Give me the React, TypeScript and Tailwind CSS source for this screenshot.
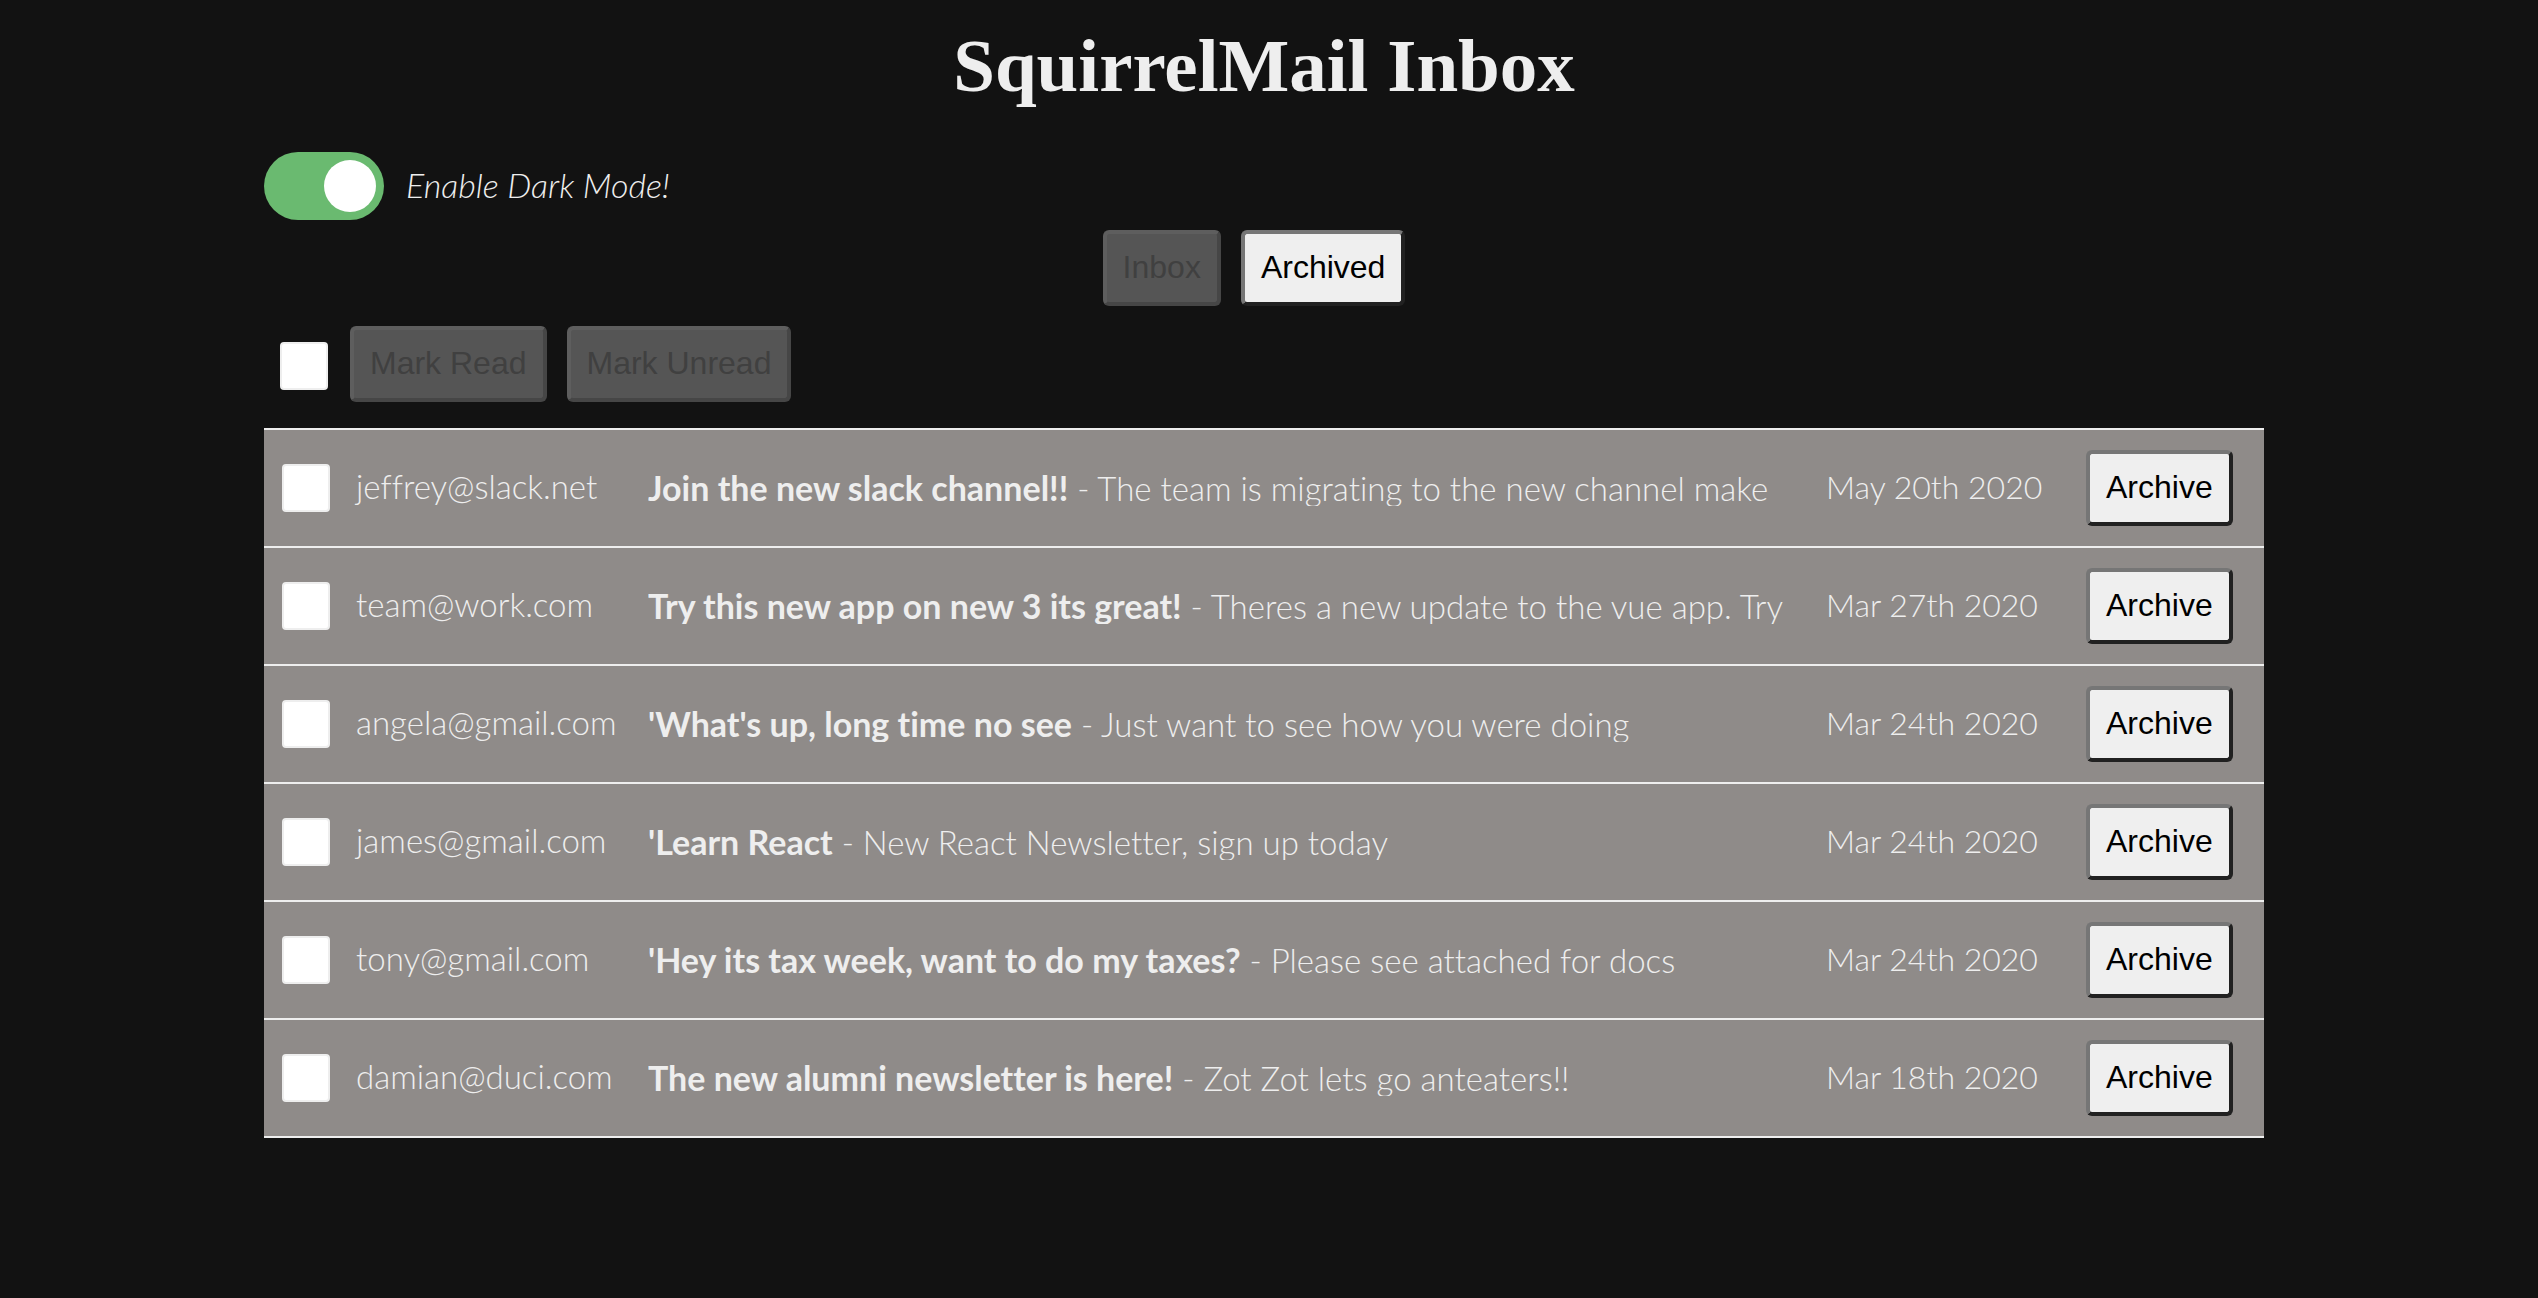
import { useState } from "react";

type Mail = { from: string; subject: string; preview: string; date: string };

const mails: Mail[] = [
  { from: "jeffrey@slack.net", subject: "Join the new slack channel!!", preview: "The team is migrating to the new channel make", date: "May 20th 2020" },
  { from: "team@work.com", subject: "Try this new app on new 3 its great!", preview: "Theres a new update to the vue app. Try", date: "Mar 27th 2020" },
  { from: "angela@gmail.com", subject: "'What's up, long time no see", preview: "Just want to see how you were doing", date: "Mar 24th 2020" },
  { from: "james@gmail.com", subject: "'Learn React", preview: "New React Newsletter, sign up today", date: "Mar 24th 2020" },
  { from: "tony@gmail.com", subject: "'Hey its tax week, want to do my taxes?", preview: "Please see attached for docs", date: "Mar 24th 2020" },
  { from: "damian@duci.com", subject: "The new alumni newsletter is here!", preview: "Zot Zot lets go anteaters!!", date: "Mar 18th 2020" },
];

const buttonBase =
  "h-[76px] rounded-md border-4 px-4 pb-0.5 font-['Liberation_Sans',Arial,sans-serif] text-[32px] leading-9 whitespace-nowrap";
const enabledButton =
  "border-t-[#767676] border-l-[#767676] border-r-[#212121] border-b-[#212121] bg-[#efefef] text-black";
const disabledButton =
  "border-t-[#5e5e5e] border-l-[#5e5e5e] border-r-[#464646] border-b-[#464646] bg-[#555555] text-[#404040]";

function Button({ label, disabled = false }: { label: string; disabled?: boolean }) {
  return (
    <button type="button" disabled={disabled} className={`${buttonBase} ${disabled ? disabledButton : enabledButton}`}>
      {label}
    </button>
  );
}

function Checkbox({ label }: { label: string }) {
  return (
    <input
      type="checkbox"
      aria-label={label}
      className="block size-12 appearance-none rounded border-2 border-[#eeeeee] bg-white checked:bg-[#6aba70]"
    />
  );
}

export default function App() {
  const [dark, setDark] = useState(true);

  return (
    <div className="min-h-screen bg-[#121212] pr-[10px] font-[Lato,sans-serif] text-[32px] leading-10 font-light text-[#eeeeee] [font-variant-ligatures:none]">
      <main className="mx-auto max-w-[2000px] pt-5">
        <h1 className="text-center font-['Liberation_Serif',serif] text-[75px] leading-[92px] font-bold">SquirrelMail Inbox</h1>

        <label className="mt-10 flex w-fit items-center gap-[22px]">
          <input
            type="checkbox"
            role="switch"
            checked={dark}
            onChange={() => setDark(!dark)}
            className="flex h-[68px] w-[120px] appearance-none items-center rounded-full bg-[#cccccc] px-2 before:size-[52px] before:rounded-full before:bg-white checked:justify-end checked:bg-[#6aba70]"
          />
          <em className="pb-0.5 text-[34px]">Enable Dark Mode!</em>
        </label>

        <nav className="mt-[10px] mr-5 flex justify-center gap-5">
          <Button label="Inbox" disabled />
          <Button label="Archived" />
        </nav>

        <div className="mt-5 flex items-center gap-5 pl-4">
          <div className="pt-1 pr-0.5">
            <Checkbox label="Select all" />
          </div>
          <Button label="Mark Read" disabled />
          <Button label="Mark Unread" disabled />
        </div>

        <table className="mt-[26px] w-full table-fixed border-collapse border-t-2 border-[#eeeeee] bg-[#8f8b89]">
          <colgroup>
            <col className="w-[92px]" />
            <col className="w-[292px]" />
            <col />
            <col className="w-[260px]" />
            <col className="w-[178px]" />
          </colgroup>
          <tbody>
            {mails.map((mail) => (
              <tr key={mail.from} className="h-[118px] border-b-2 border-[#eeeeee]">
                <td className="pl-[18px]">
                  <Checkbox label={`Select mail from ${mail.from}`} />
                </td>
                <td className="pb-1 text-[33px]">{mail.from}</td>
                <td>
                  <p className="h-9 overflow-hidden text-[33px] leading-9 whitespace-nowrap">
                    <strong className="text-[34px] font-bold">{mail.subject}</strong> - {mail.preview}
                  </p>
                </td>
                <td className="pb-0.5">{mail.date}</td>
                <td>
                  <Button label="Archive" />
                </td>
              </tr>
            ))}
          </tbody>
        </table>
      </main>
    </div>
  );
}
